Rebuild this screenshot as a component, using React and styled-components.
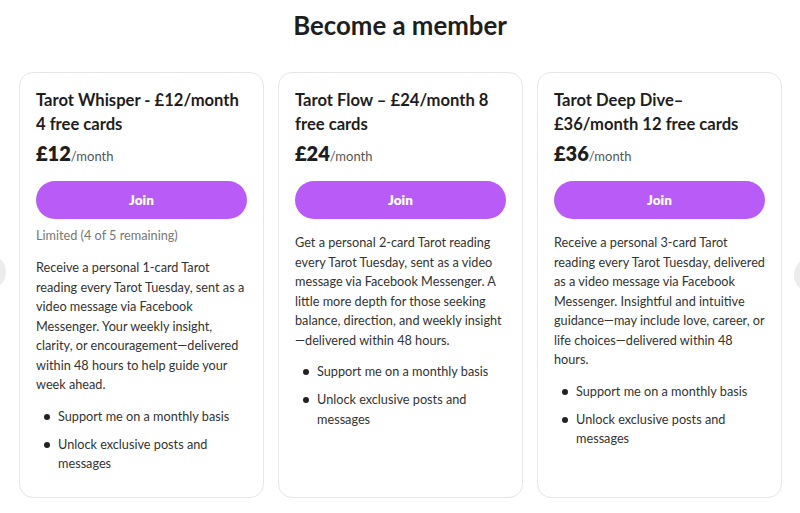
import React from "react";
import styled, { createGlobalStyle } from "styled-components";

const Global = createGlobalStyle`
  html, body { margin: 0; padding: 0; background: #fff; }
  body { font-family: "Lato", "Noto Sans", sans-serif; color: #202020; }
  * { box-sizing: border-box; }
`;

const Page = styled.div`
  position: relative;
  width: 800px;
  height: 513px;
  overflow: hidden;
  padding-top: 10px;
`;

const Title = styled.h1`
  margin: 0;
  text-align: center;
  font-family: "Lato", sans-serif;
  font-weight: 700;
  font-size: 25.8px;
  line-height: 30px;
  color: #1e1e1e;
`;

const Cards = styled.div`
  display: grid;
  grid-template-columns: repeat(3, 245px);
  grid-template-rows: 426px;
  gap: 14px;
  padding: 0 19px;
  margin-top: 32px;
`;

const Card = styled.div`
  border: 1px solid #e6e6e6;
  border-radius: 14px;
  padding: 15px 16px 0;
  display: flex;
  flex-direction: column;
  overflow: hidden;
  & > * { flex-shrink: 0; }
`;

const CardTitle = styled.h2`
  margin: 0;
  font-size: 16.6px;
  font-weight: 700;
  line-height: 24px;
  color: #1e1e1e;
`;

const Price = styled.div`
  margin-top: 5px;
  font-size: 13px;
  color: #555;
  line-height: 24px;
  b { font-size: 20px; font-weight: 800; color: #1e1e1e; }
`;

const JoinButton = styled.button`
  margin-top: 13px;
  height: 38px;
  width: 100%;
  border: none;
  border-radius: 19px;
  background: #b95cf7;
  color: #fff;
  font-family: inherit;
  font-weight: 800;
  font-size: 13.5px;
  cursor: pointer;
`;

const Limited = styled.div`
  margin-top: 7px;
  font-size: 12.7px;
  color: #777;
  line-height: 18px;
`;

const Desc = styled.p`
  margin: ${(p) => (p.$tight ? "14px" : "14px")} 0 0;
  font-size: 12.7px;
  line-height: 19.5px;
  color: #333;
`;

const List = styled.ul`
  margin: 12px 0 0;
  padding: 0 0 0 22px;
  list-style: none;
`;

const Item = styled.li`
  position: relative;
  font-size: 12.7px;
  line-height: 19.5px;
  color: #333;
  margin-bottom: 8.5px;
  &::before {
    content: "";
    position: absolute;
    left: -14px;
    top: 7px;
    width: 6px;
    height: 6px;
    border-radius: 50%;
    background: #222;
  }
`;

const Arrow = styled.div`
  position: absolute;
  top: ${(p) => p.$top}px;
  ${(p) => p.$side}: -30px;
  width: 36px;
  height: 36px;
  border-radius: 50%;
  background: #ececec;
`;

const tiers = [
  {
    title: "Tarot Whisper - £12/month 4 free cards",
    price: "£12",
    limited: "Limited (4 of 5 remaining)",
    desc: "Receive a personal 1-card Tarot reading every Tarot Tuesday, sent as a video message via Facebook Messenger. Your weekly insight, clarity, or encouragement—delivered within 48 hours to help guide your week ahead.",
  },
  {
    title: "Tarot Flow – £24/month 8 free cards",
    price: "£24",
    desc: "Get a personal 2-card Tarot reading every Tarot Tuesday, sent as a video message via Facebook Messenger. A little more depth for those seeking balance, direction, and weekly insight —delivered within 48 hours.",
  },
  {
    title: "Tarot Deep Dive–£36/month 12 free cards",
    price: "£36",
    desc: "Receive a personal 3-card Tarot reading every Tarot Tuesday, delivered as a video message via Facebook Messenger. Insightful and intuitive guidance—may include love, career, or life choices—delivered within 48 hours.",
  },
];

export default function App() {
  return (
    <Page>
      <Global />
      <Title>Become a member</Title>
      <Cards>
        {tiers.map((t) => (
          <Card key={t.price}>
            <CardTitle>{t.title}</CardTitle>
            <Price>
              <b>{t.price}</b>/month
            </Price>
            <JoinButton>Join</JoinButton>
            {t.limited && <Limited>{t.limited}</Limited>}
            <Desc $tight={!t.limited}>{t.desc}</Desc>
            <List>
              <Item>Support me on a monthly basis</Item>
              <Item>Unlock exclusive posts and messages</Item>
            </List>
          </Card>
        ))}
      </Cards>
      <Arrow $side="left" $top={254} />
      <Arrow $side="right" $top={257} />
    </Page>
  );
}
